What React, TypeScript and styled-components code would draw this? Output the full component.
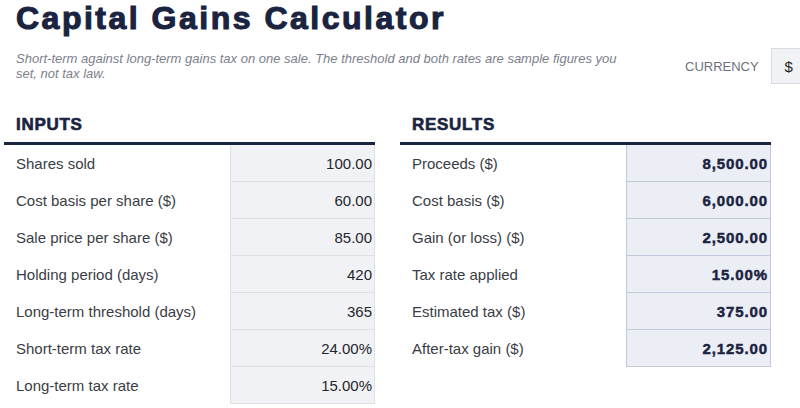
import React from "react";
import styled, { createGlobalStyle } from "styled-components";

const Global = createGlobalStyle`
  html, body { margin: 0; padding: 0; background: #ffffff; overflow: hidden; }
  body { font-family: "Liberation Sans", Arial, sans-serif; }
  * { box-sizing: border-box; }
`;

const Page = styled.div`
  width: 840px;
  padding: 0 16px;
  color: #2f323a;
`;

const Title = styled.h1`
  margin: 0;
  font-family: "Liberation Sans", Arial, sans-serif;
  font-weight: 700;
  font-size: 32px;
  line-height: 36px;
  letter-spacing: 2.5px;
  -webkit-text-stroke: 1.1px #1a2340;
  color: #1a2340;
`;

const HeaderRow = styled.div`
  display: flex;
  align-items: center;
  margin-top: 12px;
`;

const Subtitle = styled.p`
  margin: 0;
  width: 620px;
  font-size: 13px;
  line-height: 15px;
  font-style: italic;
  color: #7c808b;
`;

const CurrencyGroup = styled.div`
  display: flex;
  align-items: center;
  gap: 12px;
  margin-left: 49px;
`;

const CurrencyLabel = styled.span`
  font-size: 13px;
  color: #6d717c;
  text-transform: uppercase;
`;

const CurrencyBox = styled.div`
  width: 36px;
  height: 36px;
  display: flex;
  align-items: center;
  justify-content: center;
  background: #f1f2f5;
  border: 1px solid #dadbe0;
  font-size: 15px;
  color: #222;
`;

const Sections = styled.div`
  display: grid;
  grid-template-columns: 371px 371px;
  column-gap: 25px;
  margin: 31px 0 0 -12px;
`;

const Section = styled.section``;

const SectionHead = styled.div`
  padding: 0 12px 7px;
  border-bottom: 3px solid #1a2340;
`;

const SectionTitle = styled.h2`
  margin: 0;
  font-size: 17px;
  line-height: 20px;
  font-weight: 700;
  letter-spacing: 0.7px;
  -webkit-text-stroke: 0.6px #1a2340;
  color: #1a2340;
`;

const Row = styled.div`
  display: grid;
  grid-template-columns: 226px 145px;
  height: 37px;
`;

const Label = styled.div`
  display: flex;
  align-items: center;
  padding-left: 12px;
  font-size: 15px;
  color: #3a3d45;
`;

const Value = styled.div<{ $result?: boolean }>`
  display: flex;
  align-items: center;
  justify-content: flex-end;
  padding-right: 2px;
  font-size: 15px;
  background: ${(p) => (p.$result ? "#eceef5" : "#f1f2f5")};
  border: 1px solid ${(p) => (p.$result ? "#c3c8db" : "#dfe0e4")};
  border-top: none;
  color: ${(p) => (p.$result ? "#1a2340" : "#24262b")};
  font-weight: ${(p) => (p.$result ? 700 : 400)};
  letter-spacing: ${(p) => (p.$result ? "0.9px" : "0")};
  -webkit-text-stroke: ${(p) => (p.$result ? "0.45px #1a2340" : "0")};
`;

const inputs: [string, string][] = [
  ["Shares sold", "100.00"],
  ["Cost basis per share ($)", "60.00"],
  ["Sale price per share ($)", "85.00"],
  ["Holding period (days)", "420"],
  ["Long-term threshold (days)", "365"],
  ["Short-term tax rate", "24.00%"],
  ["Long-term tax rate", "15.00%"],
];

const results: [string, string][] = [
  ["Proceeds ($)", "8,500.00"],
  ["Cost basis ($)", "6,000.00"],
  ["Gain (or loss) ($)", "2,500.00"],
  ["Tax rate applied", "15.00%"],
  ["Estimated tax ($)", "375.00"],
  ["After-tax gain ($)", "2,125.00"],
];

export default function App() {
  return (
    <>
      <Global />
      <Page>
        <Title>Capital Gains Calculator</Title>
        <HeaderRow>
          <Subtitle>
            Short-term against long-term gains tax on one sale. The threshold and both rates are sample figures you
            set, not tax law.
          </Subtitle>
          <CurrencyGroup>
            <CurrencyLabel>Currency</CurrencyLabel>
            <CurrencyBox>$</CurrencyBox>
          </CurrencyGroup>
        </HeaderRow>
        <Sections>
          <Section>
            <SectionHead>
              <SectionTitle>INPUTS</SectionTitle>
            </SectionHead>
            {inputs.map(([l, v]) => (
              <Row key={l}>
                <Label>{l}</Label>
                <Value>{v}</Value>
              </Row>
            ))}
          </Section>
          <Section>
            <SectionHead>
              <SectionTitle>RESULTS</SectionTitle>
            </SectionHead>
            {results.map(([l, v]) => (
              <Row key={l}>
                <Label>{l}</Label>
                <Value $result>{v}</Value>
              </Row>
            ))}
          </Section>
        </Sections>
      </Page>
    </>
  );
}
